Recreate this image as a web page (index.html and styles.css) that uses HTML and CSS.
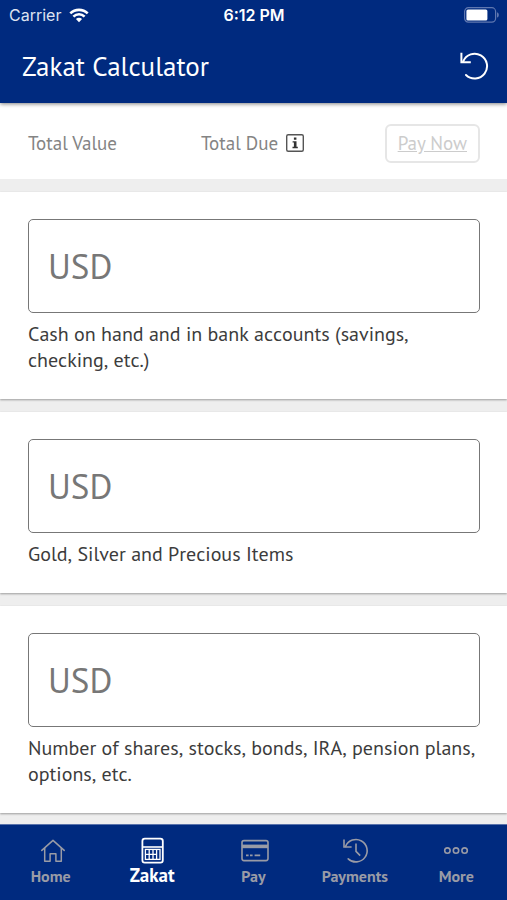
FILE: index.html
```html
<!DOCTYPE html>
<html lang="en">
<head>
<meta charset="utf-8">
<meta name="viewport" content="width=device-width, initial-scale=1">
<title>Zakat Calculator</title>
<link rel="stylesheet" href="styles.css">
</head>
<body>
<div class="app">
  <header class="header">
    <div class="status">
      <div class="carrier">
        <span>Carrier</span>
        <svg width="20" height="15" viewBox="0 0 20 15" aria-hidden="true">
          <g fill="none" stroke="#fff" stroke-width="2.6">
            <path d="M1.3 5.4a12.4 12.4 0 0 1 17.4 0"/>
            <path d="M4.4 8.6a8 8 0 0 1 11.2 0"/>
          </g>
          <path d="M6.9 11.1a4.5 4.5 0 0 1 6.2 0L10 14.3z" fill="#fff"/>
        </svg>
      </div>
      <span class="time">6:12 PM</span>
      <div class="battery">
        <svg width="37" height="16" viewBox="0 0 37 16" aria-hidden="true">
          <rect x="2.6" y=".7" width="31" height="14.4" rx="3.8" fill="none" stroke="#5f77b0" stroke-width="1.2"/>
          <rect x="4.4" y="2.5" width="21" height="11" rx="1.6" fill="#fff"/>
          <path d="M35 5.2c2.4.8 2.4 4.6 0 5.4z" fill="#5f77b0"/>
        </svg>
      </div>
    </div>
    <div class="titlebar">
      <h1>Zakat Calculator</h1>
      <button class="reset" type="button" aria-label="Reset">
        <svg width="30" height="30" viewBox="0 0 30 30" fill="none" stroke="#fff" stroke-width="2" aria-hidden="true">
          <path d="M4.2 10.4A12.4 12.4 0 1 1 7 24" stroke-linecap="round"/>
          <path d="M2.4 1.8v9.4h9.4"/>
        </svg>
      </button>
    </div>
  </header>

  <section class="summary">
    <div class="total">Total Value</div>
    <div class="due">
      <span>Total Due</span>
      <button class="info" type="button" aria-label="About total due">
        <svg width="20" height="20" viewBox="0 0 20 20" aria-hidden="true">
          <rect x="1.7" y="1.7" width="16.6" height="16.6" rx="1.5" fill="none" stroke="#555" stroke-width="1.4"/>
          <path d="M8.9 4.5h2.5v2.3H8.9zM7.6 8.2h3.9v5.6h1.3v1.4H7.5v-1.4h1.4V9.6H7.6z" fill="#333"/>
        </svg>
      </button>
    </div>
    <button class="pay" type="button" disabled>Pay Now</button>
  </section>

  <main class="cards">
    <section class="card">
      <input id="cash" type="text" inputmode="decimal" placeholder="USD">
      <label for="cash">Cash on hand and in bank accounts (savings, checking, etc.)</label>
    </section>
    <section class="card">
      <input id="gold" type="text" inputmode="decimal" placeholder="USD">
      <label for="gold">Gold, Silver and Precious Items</label>
    </section>
    <section class="card">
      <input id="shares" type="text" inputmode="decimal" placeholder="USD">
      <label for="shares">Number of shares, stocks, bonds, IRA, pension plans, options, etc.</label>
    </section>
  </main>

  <nav class="tabs">
    <a class="tab" href="#home">
      <svg width="28" height="28" viewBox="0 0 28 28" fill="none" stroke="currentColor" stroke-width="1.5" stroke-linejoin="round" aria-hidden="true">
        <path d="M4.8 13.4 16 3.4l11.2 10" stroke-linecap="round"/>
        <path d="M7.7 11v13.3h5.4v-7.6h5.8v7.6h5.4V11"/>
      </svg>
      <span>Home</span>
    </a>
    <a class="tab active" href="#zakat" aria-current="page">
      <svg width="28" height="28" viewBox="0 0 28 28" fill="none" stroke="currentColor" aria-hidden="true">
        <rect x="4.4" y="1.6" width="20.4" height="24" rx="2.4" stroke-width="1.8"/>
        <path d="M4.4 10h20.4" stroke-width="1.6"/>
        <rect x="7.4" y="12.4" width="14.6" height="10" stroke-width="1.3"/>
        <path d="M11.2 12.4v10M15 12.4v10M18.6 12.4v10M7.4 17.4h11.2" stroke-width="1.3"/>
      </svg>
      <span>Zakat</span>
    </a>
    <a class="tab" href="#pay">
      <svg width="32" height="28" viewBox="0 0 32 28" fill="none" stroke="currentColor" stroke-width="1.6" aria-hidden="true">
        <rect x="5" y="3.6" width="26" height="20" rx="2"/>
        <path d="M5 9.4h26" stroke-width="3.6"/>
        <path d="M9 18.4h2.6M13 18.4h2.6M17.6 18.4h5.6"/>
      </svg>
      <span>Pay</span>
    </a>
    <a class="tab" href="#payments">
      <svg width="28" height="28" viewBox="0 0 28 28" fill="none" stroke="currentColor" stroke-width="1.6" aria-hidden="true">
        <path d="M4.6 9.4A11.2 11.2 0 1 1 7.2 21.8" stroke-linecap="round"/>
        <path d="M3 2.6V10h7.6"/>
        <path d="M15 6.4v8l4.2 4.2"/>
      </svg>
      <span>Payments</span>
    </a>
    <a class="tab" href="#more">
      <svg width="28" height="28" viewBox="0 0 28 28" fill="none" stroke="currentColor" stroke-width="1.6" aria-hidden="true">
        <circle cx="5.4" cy="13.6" r="2.7"/><circle cx="14" cy="13.6" r="2.7"/><circle cx="22.6" cy="13.6" r="2.7"/>
      </svg>
      <span>More</span>
    </a>
  </nav>
</div>
</body>
</html>
```
FILE: styles.css
```css
* {
  box-sizing: border-box;
}

body {
  margin: 0;
  background: #eee;
  color: #3c3c3c;
  font-family: "PT Sans", "Noto Sans", sans-serif;
  font-size: 20px;
  line-height: 26px;
}

button,
input {
  font: inherit;
}

svg {
  display: block;
}

.app {
  display: flex;
  flex-direction: column;
  min-height: 100vh;
}

.header {
  position: sticky;
  top: 0;
  z-index: 1;
  background: #002a7f;
  color: #fff;
  box-shadow: 0 1px 4px rgba(0, 0, 0, 0.5);
}

.status {
  display: grid;
  grid-template-columns: 1fr auto 1fr;
  align-items: center;
  height: 30px;
  padding: 0 8px 0 9px;
  font-family: Inter, sans-serif;
  font-size: 16px;
}

.carrier {
  display: flex;
  align-items: center;
  gap: 8px;
  color: #dde3f1;
}

.time {
  font-weight: 600;
}

.battery {
  justify-self: end;
}

.titlebar {
  display: flex;
  align-items: center;
  justify-content: space-between;
  height: 73px;
  padding: 0 18px 2px 22px;
}

h1 {
  margin: 0;
  font-size: 27px;
  font-weight: 400;
  line-height: 32px;
}

.reset,
.info {
  padding: 0;
  border: 0;
  background: none;
}

.summary {
  display: grid;
  grid-template-columns: 173px 1fr auto;
  align-items: center;
  height: 76px;
  padding: 4px 27px 0 28px;
  background: #fff;
  color: #848484;
  font-size: 19px;
}

.due {
  display: flex;
  align-items: center;
  gap: 7px;
}

.pay {
  height: 39px;
  padding: 0 11px;
  border: 2px solid #e6e6e6;
  border-radius: 6px;
  background: #fff;
  color: #ccc;
  text-decoration: underline;
}

.cards {
  display: flex;
  flex: 1;
  flex-direction: column;
  gap: 13px;
  padding: 13px 0 11px;
}

.card {
  padding: 27px 27px 26px 28px;
  background: #fff;
  box-shadow: 0 1px 2px rgba(0, 0, 0, 0.35);
}

.card input {
  display: block;
  width: 100%;
  height: 94px;
  margin-bottom: 8px;
  padding: 0 19px;
  border: 1px solid #777;
  border-radius: 5px;
  background: #fff;
  color: #3c3c3c;
  font-size: 35px;
}

.card input::placeholder {
  color: #777;
  opacity: 1;
}

.card label {
  display: block;
  font-kerning: none;
}

.tabs {
  position: sticky;
  bottom: 0;
  display: grid;
  grid-template-columns: repeat(5, 1fr);
  height: 76px;
  padding-top: 12px;
  border-top: 1px solid #5a73ab;
  background: #002a7f;
}

.tab {
  display: flex;
  flex-direction: column;
  align-items: center;
  color: #999ba6;
  font-size: 16px;
  font-weight: 700;
  line-height: 22px;
  text-decoration: none;
}

.tab.active {
  color: #fff;
  font-size: 19px;
  line-height: 20px;
}
```
